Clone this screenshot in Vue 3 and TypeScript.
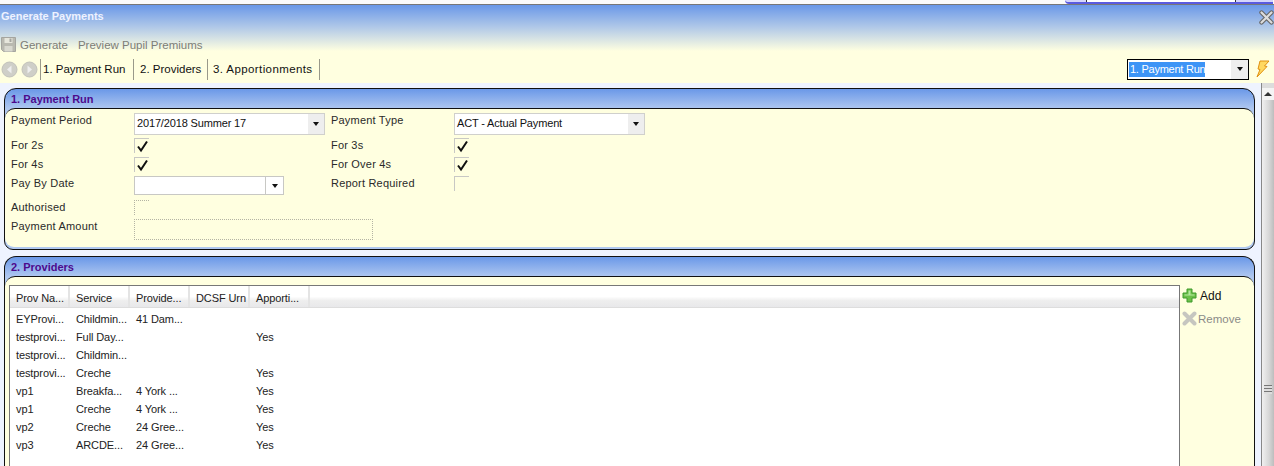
<template>
  <div class="page">
    <div class="top-strip">
      <div class="strip-tab"><div class="strip-box"></div></div>
    </div>
    <div class="head">
      <div class="title-row">
        <span class="title">Generate Payments</span>
        <svg class="close" width="15" height="15" viewBox="0 0 15 15">
          <path d="M2.5 2.5 L12.5 12.5 M12.5 2.5 L2.5 12.5" stroke="#666" stroke-width="4.4" stroke-linecap="round" />
          <path d="M2.5 2.5 L12.5 12.5 M12.5 2.5 L2.5 12.5" stroke="#ddd" stroke-width="2.2" stroke-linecap="round" />
        </svg>
      </div>
      <div class="tool-row">
        <svg class="save" width="15" height="15" viewBox="0 0 15 15">
          <path d="M0.5 0.5 H14.5 V14.5 H2.5 L0.5 12.5 Z" fill="#b9b9b0" stroke="#a5a5a0" />
          <rect x="3.5" y="1" width="8" height="5" fill="#e6e6dc" />
          <rect x="3.5" y="9" width="8" height="5.5" fill="#d9d9d0" />
          <rect x="8.5" y="1.5" width="2" height="3.5" fill="#a5a5a0" />
        </svg>
        <span class="tool">Generate</span>
        <span class="tool tool-gap">Preview Pupil Premiums</span>
      </div>
      <div class="nav-row">
        <svg class="nav-btn" width="17" height="17" viewBox="0 0 17 17">
          <circle cx="8.5" cy="8.5" r="7.5" fill="#cfcfc8" stroke="#c2c2bb" />
          <path d="M10.5 4.5 L6 8.5 L10.5 12.5 Z" fill="#eeeeee" />
        </svg>
        <svg class="nav-btn next" width="17" height="17" viewBox="0 0 17 17">
          <circle cx="8.5" cy="8.5" r="7.5" fill="#cfcfc8" stroke="#c2c2bb" />
          <path d="M6.5 4.5 L11 8.5 L6.5 12.5 Z" fill="#eeeeee" />
        </svg>
        <a v-for="s in steps" :key="s" class="step">{{ s }}</a>
        <div class="jump">
          <div class="jump-box">
            <span class="jump-text">1. Payment Run</span>
            <span class="jump-arrow"><i class="caret"></i></span>
          </div>
          <svg class="bolt" width="15" height="18" viewBox="0 0 15 18">
            <path d="M5 1 L14 1 L9.5 6 L12 6.5 L2 17 L5 9.5 L3 9 Z" fill="#ffd860" stroke="#e09010" stroke-width="1" />
          </svg>
        </div>
      </div>
    </div>

    <div class="content">
      <div class="panels">
        <section class="panel first">
          <h3 class="panel-head">1. Payment Run</h3>
          <div class="panel-body form">
            <div class="row r-period">
              <label>Payment Period</label>
              <div class="select wide"><span class="val">2017/2018 Summer 17</span><span class="arrow"><i class="caret"></i></span></div>
              <label class="second">Payment Type</label>
              <div class="select wide"><span class="val">ACT - Actual Payment</span><span class="arrow"><i class="caret"></i></span></div>
            </div>
            <div class="row r-check">
              <label>For 2s</label>
              <div class="ctl"><div class="check"><svg width="13" height="13" viewBox="0 0 13 13"><path d="M2 6.5 L5 10.5 L11 1.5" fill="none" stroke="#111" stroke-width="2" /></svg></div></div>
              <label class="second">For 3s</label>
              <div class="check"><svg width="13" height="13" viewBox="0 0 13 13"><path d="M2 6.5 L5 10.5 L11 1.5" fill="none" stroke="#111" stroke-width="2" /></svg></div>
            </div>
            <div class="row r-check">
              <label>For 4s</label>
              <div class="ctl"><div class="check"><svg width="13" height="13" viewBox="0 0 13 13"><path d="M2 6.5 L5 10.5 L11 1.5" fill="none" stroke="#111" stroke-width="2" /></svg></div></div>
              <label class="second">For Over 4s</label>
              <div class="check"><svg width="13" height="13" viewBox="0 0 13 13"><path d="M2 6.5 L5 10.5 L11 1.5" fill="none" stroke="#111" stroke-width="2" /></svg></div>
            </div>
            <div class="row r-date">
              <label>Pay By Date</label>
              <div class="ctl"><div class="date"><span class="date-arrow"><i class="caret"></i></span></div></div>
              <label class="second">Report Required</label>
              <div class="check"></div>
            </div>
            <div class="row r-auth">
              <label>Authorised</label>
              <div class="ctl"><div class="dotted small"></div></div>
            </div>
            <div class="row r-amount">
              <label>Payment Amount</label>
              <div class="dotted amount"></div>
            </div>
          </div>
        </section>

        <section class="panel second-panel">
          <h3 class="panel-head">2. Providers</h3>
          <div class="panel-body providers">
            <div class="grid">
              <div class="grid-head">
                <span v-for="c in columns" :key="c" class="th">{{ c }}</span>
                <span class="th-fill"></span>
              </div>
              <div v-for="(r, i) in rows" :key="i" class="tr">
                <span v-for="(v, j) in r" :key="j" class="td">{{ v }}</span>
              </div>
            </div>
            <div class="side">
              <div class="side-btn add">
                <svg width="15" height="15" viewBox="0 0 15 15">
                  <path d="M5 1 H10 V5 H14 V10 H10 V14 H5 V10 H1 V5 H5 Z" fill="#6cc04a" stroke="#3f9a2c" />
                  <path d="M6.5 2.5 H8.5 V6.5 H12.5 V7.5 H2.5 V6.5 H6.5 Z" fill="#b5e8a0" />
                </svg>
                <span>Add</span>
              </div>
              <div class="side-btn remove">
                <svg width="15" height="15" viewBox="0 0 15 15">
                  <path d="M2.5 2.5 L12.5 12.5 M12.5 2.5 L2.5 12.5" stroke="#c6c6c0" stroke-width="4" stroke-linecap="round" />
                </svg>
                <span>Remove</span>
              </div>
            </div>
          </div>
        </section>
      </div>

      <div class="scrollbar">
        <div class="scroll-up"><i class="up"></i></div>
        <div class="scroll-thumb">
          <div class="grip"></div>
        </div>
      </div>
    </div>
  </div>
</template>

<script setup lang="ts">
const steps = ['1. Payment Run', '2. Providers', '3. Apportionments']
const columns = ['Prov Na...', 'Service', 'Provide...', 'DCSF Urn', 'Apporti...']
const rows: string[][] = [
  ['EYProvi...', 'Childmin...', '41 Dam...', '', ''],
  ['testprovi...', 'Full Day...', '', '', 'Yes'],
  ['testprovi...', 'Childmin...', '', '', ''],
  ['testprovi...', 'Creche', '', '', 'Yes'],
  ['vp1', 'Breakfa...', '4 York ...', '', 'Yes'],
  ['vp1', 'Creche', '4 York ...', '', 'Yes'],
  ['vp2', 'Creche', '24 Gree...', '', 'Yes'],
  ['vp3', 'ARCDE...', '24 Gree...', '', 'Yes'],
]
</script>

<style>
html, body { margin: 0; overflow: hidden; }
</style>

<style scoped>
.page { width: 1274px; height: 466px; display: flex; flex-direction: column; overflow: hidden; background: #eef3ff; font-family: "Liberation Sans", Arial, sans-serif; font-size: 11px; color: #222; }
.top-strip { height: 4px; flex: none; background: #fbfbfb; border-bottom: 1px solid #777; position: relative; display: flex; justify-content: flex-end; }
.strip-tab { width: 208px; height: 4px; margin-right: 1px; background: #d5d5fb; border-bottom: 2px solid #5a5ae0; box-sizing: border-box; border-bottom-left-radius: 6px; display: flex; justify-content: center; }
.strip-box { width: 148px; margin-left: -17px; height: 2px; background: #fff; border-left: 1px solid #333; border-right: 1px solid #333; }

.head { flex: none; height: 78px; background: linear-gradient(#6a98e8 0, #b0c8e8 22px, #ffffe0 46px); display: flex; flex-direction: column; }
.title-row { height: 22px; display: flex; align-items: center; justify-content: space-between; padding: 0 0 0 1px; }
.title { color: #eef2ff; font-weight: bold; font-size: 11px; }
.close { margin-top: 3px; }
.tool-row { height: 25px; margin-top: 5px; display: flex; align-items: center; padding-left: 1px; color: #777; }
.save { margin-right: 4px; }
.tool { font-size: 11.5px; color: #7d7d78; }
.tool-gap { margin-left: 10px; }
.nav-row { height: 24px; display: flex; align-items: center; padding-left: 1px; }
.nav-btn { flex: none; }
.next { margin-left: 3px; margin-right: 2px; }
.step { height: 21px; line-height: 21px; box-sizing: border-box; padding-left: 6px; border-left: 1px solid #99998a; font-size: 11.5px; color: #111; white-space: nowrap; }
.step:nth-of-type(1) { width: 93px; padding-left: 2px; }
.step:nth-of-type(2) { width: 74px; }
.step:nth-of-type(3) { width: 113px; padding-left: 5px; letter-spacing: 0.4px; border-right: 1px solid #99998a; }
.jump { margin-left: auto; display: flex; align-items: center; margin-right: 4px; }
.jump-box { width: 122px; height: 21px; border: 1px solid #000; background: #fff; box-sizing: border-box; display: flex; align-items: stretch; padding-left: 1px; }
.jump-text { align-self: center; background: #3d94f6; color: #fff; font-size: 11px; line-height: 15px; padding: 0 0 0 1px; letter-spacing: -0.25px; }
.jump-arrow { margin-left: auto; width: 17px; background: #eeeeee; display: flex; align-items: center; justify-content: center; }
.bolt { margin-left: 6px; }
.caret { display: block; width: 0; height: 0; border-left: 3.5px solid transparent; border-right: 3.5px solid transparent; border-top: 4px solid #111; }

.content { flex: 1; min-height: 0; display: flex; }
.panels { flex: 1; padding: 5px 6px 0 4px; display: flex; flex-direction: column; gap: 6px; min-width: 0; }
.panel { border: 1px solid #111; border-radius: 12px 12px 0 0; background: linear-gradient(#6a98e8, #b0c8f0 20px); display: flex; flex-direction: column; box-sizing: border-box; }
.first { height: 162px; flex: none; border-radius: 12px 12px 9px 9px; padding-bottom: 2px; }
.second-panel { flex: 1; border-bottom: none; }
.panel-head { margin: 0; height: 19px; flex: none; line-height: 21px; padding-left: 6px; font-size: 11px; font-weight: bold; color: #4d0a8c; }
.panel-body { flex: 1; background: #ffffe0; border-top: 1px solid #111; border-radius: 10px 10px 9px 9px; min-height: 0; }

.form { padding: 4px 0 0 6px; }
.row { display: flex; align-items: flex-start; }
.row label { width: 123px; flex: none; letter-spacing: 0.2px; color: #2a2a2a; }
.ctl { width: 197px; flex: none; }
.r-period { height: 25px; }
.r-period label { padding-top: 1px; }
.r-check { height: 19px; }
.r-date { height: 24px; }
.r-auth { height: 19px; }
.r-check label, .r-date label, .r-auth label, .r-amount label { padding-top: 1px; }
.select { width: 191px; height: 22px; box-sizing: border-box; background: #fff; border: 1px solid #d0d0cc; display: flex; align-items: center; padding-left: 2px; color: #111; line-height: 20px; letter-spacing: -0.15px; }
.select.wide { margin-right: 6px; }
.val { margin-bottom: 2px; }
.arrow { margin-left: auto; width: 16px; height: 100%; background: #eeeeee; display: flex; align-items: center; justify-content: center; }
.check { width: 15px; height: 15px; box-sizing: border-box; border-left: 1px solid #c8c8c4; border-top: 1px solid #c8c8c4; display: flex; align-items: center; justify-content: center; }
.date { width: 150px; height: 19px; box-sizing: border-box; background: #fff; border: 1px solid #c8c8c4; display: flex; justify-content: flex-end; }
.date-arrow { width: 17px; border-left: 1px solid #c8c8c4; display: flex; align-items: center; justify-content: center; }
.dotted { border: 1px dotted #b4b4a4; box-sizing: border-box; }
.small { width: 15px; height: 15px; border-right: none; border-bottom: none; }
.amount { width: 239px; height: 21px; }

.providers { display: flex; align-items: flex-start; padding: 7px 0 0 4px; }
.grid { width: 1171px; height: 300px; margin-top: 1px; flex: none; box-sizing: border-box; background: #fff; border: 1px solid #777; border-bottom: none; color: #222; }
.grid-head { height: 21px; margin-bottom: 2px; display: flex; background: linear-gradient(#fff, #fff 50%, #eeeeee 70%, #e8e8ea); border-bottom: 1px solid #ddd; }
.th { width: 60px; box-sizing: border-box; padding-left: 6px; line-height: 24px; border-right: 2px solid #e4e4e4; letter-spacing: -0.1px; white-space: nowrap; }
.th-fill { flex: 1; }
.tr { height: 18px; display: flex; line-height: 18px; }
.td { width: 60px; box-sizing: border-box; padding-left: 6px; letter-spacing: -0.1px; white-space: nowrap; }
.side { margin-left: 2px; }
.side-btn { display: flex; align-items: center; height: 23px; }
.add { gap: 3px; font-size: 12px; color: #111; }
.remove { gap: 1px; font-size: 11.5px; color: #8b8b88; }

.scrollbar { width: 12px; flex: none; padding-top: 5px; box-sizing: content-box; border-left: 1px solid #888; background: #dcdcdc; display: flex; flex-direction: column; }
.scroll-up { height: 12px; background: #f4f4f4; display: flex; align-items: center; justify-content: center; flex: none; }
.up { width: 0; height: 0; border-left: 4px solid transparent; border-right: 4px solid transparent; border-bottom: 4px solid #333; }
.scroll-thumb { flex: 1; background: linear-gradient(90deg, #f0f0f0, #d6d6d6 60%, #bdbdbd); position: relative; }
.grip { position: absolute; top: 285px; left: 2px; width: 8px; height: 9px; background: repeating-linear-gradient(#777 0, #777 1px, #ddd 1px, #ddd 3px); }
</style>
